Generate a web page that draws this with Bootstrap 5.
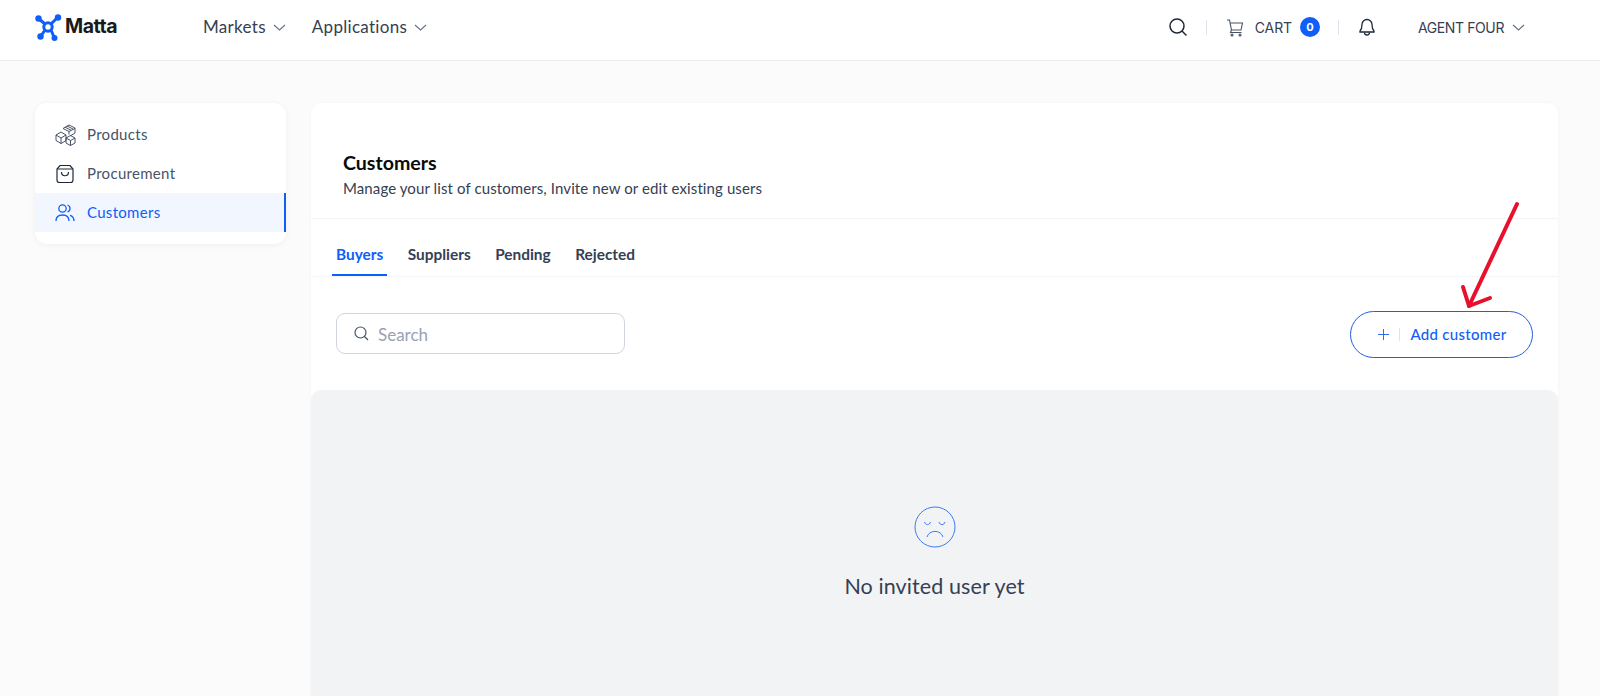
<!DOCTYPE html>
<html lang="en">
<head>
<meta charset="utf-8">
<title>Matta - Customers</title>
<link href="https://cdn.jsdelivr.net/npm/bootstrap@5.3.0/dist/css/bootstrap.min.css" rel="stylesheet">
<style>
html,body{height:696px;overflow:hidden}
body{background:#fbfbfc;font-family:"Inter","Noto Sans",sans-serif;color:#344054}
.topbar{height:61px;background:#fff;border-bottom:1px solid #eaecf0;padding:0 75px 6px 34px}
.brand-txt{font-size:19.5px;font-weight:700;color:#1a1a1a;letter-spacing:-.5px;margin-left:3px}
.logo-wrap{width:169px}
.menu-link{font-family:"Lato","Inter",sans-serif;font-size:17px;color:#344054;letter-spacing:.3px;margin-right:26px;text-decoration:none}
.menu-link svg{margin-left:7px}
.top-sep{width:1px;height:15px;background:#dfe3ec}
.cart-txt{font-size:14px;color:#344054;letter-spacing:-.1px}
.cart-count{width:20px;height:20px;background:#0f5ef7;color:#fff;font-size:11px;font-weight:700}
.agent-txt{font-size:14px;color:#344054;letter-spacing:-.4px}
.page-shell{padding:42px 42px 0 35px;gap:25px;height:635px}
.side-box{width:251px;height:141px;background:#fff;border-radius:12px;box-shadow:0 1px 6px rgba(16,24,40,.05);padding-top:12px;flex:none}
.side-item{height:39px;padding-left:20px;gap:10px;font-family:"Lato","Inter",sans-serif;font-size:15px;color:#475467;letter-spacing:.3px;text-decoration:none}
.side-item.on{background:#f1f6ff;color:#0f5ef7;border-right:2px solid #0f5ef7}
.side-icon{width:22px;flex:none}
.main-box{background:#fff;border-radius:10px 10px 0 0;box-shadow:0 0 3px rgba(16,24,40,.04);min-width:0}
.head-zone{height:116px;padding:49px 32px 0;border-bottom:1px solid #f2f4f7}
.head-title{font-family:"Lato","Inter",sans-serif;font-size:19.6px;font-weight:700;color:#0a0a0a;line-height:22px;margin:0}
.head-sub{font-family:"Lato","Inter",sans-serif;font-size:15px;color:#344054;line-height:20px;margin:4px 0 0;letter-spacing:.1px}
.tab-zone{height:58px;padding-left:21px;border-bottom:1px solid #f2f4f7;gap:0}
.tab-link{height:57px;padding:14px 4px 0;margin-right:16.500px;font-family:"Lato","Inter",sans-serif;font-size:15.400px;font-weight:700;color:#344054;text-decoration:none;margin-bottom:-1px}
.tab-link.on{color:#0f5ef7;border-bottom:2px solid #0f5ef7;padding-top:16px}
.tool-zone{height:113px;padding:0 25px}
.search-field{width:289px;height:41px;border:1px solid #d0d5dd;border-radius:9px;padding-left:17px;gap:10px}
.search-field input{border:0;outline:0;background:transparent;font-family:"Lato","Inter",sans-serif;font-size:17px;width:220px;padding:2px 0 0;color:#344054;margin-left:-1px}
.search-field input::placeholder{color:#98a2b3;opacity:1}
.add-btn{width:183px;height:47px;border:1px solid #1f5fe8;border-radius:24px;background:#fff;color:#0f5ef7;font-family:"Lato","Inter",sans-serif;font-size:15px;font-weight:500;letter-spacing:.3px;gap:10px;margin-top:1px;padding-left:8px}
.btn-sep{width:1px;height:13px;background:#dfe3ec}
.empty-zone{background:#f2f3f5;border-radius:10px 10px 0 0;flex:1;padding-top:116px}
.empty-txt{font-family:"Lato","Inter",sans-serif;font-size:21.500px;color:#344054;margin:22px 0 0;letter-spacing:.1px}
.arrow-over{position:absolute;left:1450px;top:198px;pointer-events:none}
</style>
</head>
<body>
<header class="topbar d-flex align-items-center">
  <div class="logo-wrap d-flex align-items-center">
    <svg width="28" height="28" viewBox="0 0 28 28" fill="none"><g stroke="#0f5ef7" stroke-width="3"><path d="M5 6 L11 11 M23 5 L17 11 M7 23 L11 17 M20 24 L17 17"/><circle cx="14" cy="14" r="4.200"/></g><g fill="#0f5ef7"><circle cx="4.500" cy="5.500" r="3.200"/><circle cx="24" cy="4.500" r="3.200"/><circle cx="6.500" cy="23.500" r="3.200"/><circle cx="20.500" cy="25" r="3"/></g></svg>
    <span class="brand-txt">Matta</span>
  </div>
  <a class="menu-link d-flex align-items-center" href="#">Markets<svg width="13" height="7" viewBox="0 0 13 7" fill="none"><path d="M1 1l5.500 5L12 1" stroke="#667085" stroke-width="1.100"/></svg></a>
  <a class="menu-link d-flex align-items-center" href="#">Applications<svg width="13" height="7" viewBox="0 0 13 7" fill="none"><path d="M1 1l5.500 5L12 1" stroke="#667085" stroke-width="1.100"/></svg></a>
  <div class="ms-auto d-flex align-items-center">
    <svg width="20" height="20" viewBox="0 0 20 20" fill="none" stroke="#1d2939" stroke-width="1.500"><circle cx="9" cy="9" r="7"/><path d="M14 14l4.500 4.500"/></svg>
    <span class="top-sep" style="margin:0 19px 0 18px"></span>
    <svg width="18" height="19" viewBox="0 0 18 19" fill="none" stroke="#475467" stroke-width="1.100"><path d="M1 2h2.500l2 10h9.500l1.500-7H4"/><path d="M5.500 12l-1 2.500h11"/><circle cx="6" cy="17" r="1"/><circle cx="14" cy="17" r="1"/></svg>
    <span class="cart-txt" style="margin-left:11px">CART</span>
    <span class="cart-count rounded-circle d-flex align-items-center justify-content-center" style="margin-left:8px">0</span>
    <span class="top-sep" style="margin:0 20px 0 18px"></span>
    <svg width="16" height="19" viewBox="0 0 16 19" fill="none" stroke="#1d2939" stroke-width="1.300"><path d="M8 1.500a5 5 0 0 0-5 5c0 4-1 5.500-2 6.500v1h14v-1c-1-1-2-2.500-2-6.500a5 5 0 0 0-5-5z"/><path d="M5.500 14.500a2.500 2.500 0 0 0 5 0"/></svg>
    <span class="agent-txt" style="margin-left:43px">AGENT FOUR</span>
    <svg class="ms-2" width="13" height="7" viewBox="0 0 13 7" fill="none"><path d="M1 1l5.500 5L12 1" stroke="#667085" stroke-width="1.100"/></svg>
  </div>
</header>
<div class="page-shell d-flex align-items-start">
  <nav class="side-box overflow-hidden">
    <a class="side-item d-flex align-items-center" href="#"><span class="side-icon d-flex"><svg width="22" height="22" viewBox="0 0 22 22" fill="none" stroke="#344054" stroke-width=".9"><path d="M8 4.500l6-3.500 6 3v5l-5 3"/><path d="M8 4.500l6 3 6-3M14 7.500v3"/><path d="M10 3.200l6 3M12 2l6 3"/><path d="M1 11l5-3 5 3v5.500l-5 3-5-3zM1 11l5 3 5-3M6 14v5.500"/><path d="M11 14l4.500-2.500L20 14v5l-4.500 2.500L11 19zM11 14l4.500 2.500L20 14M15.500 16.500v5"/></svg></span>Products</a>
    <a class="side-item d-flex align-items-center" href="#"><span class="side-icon d-flex"><svg width="20" height="20" viewBox="0 0 20 20" fill="none" stroke="#1d2939" stroke-width="1.200"><path d="M5 1.500h10l3 3.500v11a2.500 2.500 0 0 1-2.500 2.500h-11A2.500 2.500 0 0 1 2 16V5z"/><path d="M2.500 5h15"/><path d="M6.500 8c0 5 7 5 7 0"/></svg></span>Procurement</a>
    <a class="side-item on d-flex align-items-center" href="#"><span class="side-icon d-flex"><svg width="20" height="20" viewBox="0 0 20 20" fill="none" stroke="#0f5ef7" stroke-width="1.300"><circle cx="7.500" cy="5.500" r="3.700"/><path d="M1 18c0-4 2.500-6 6.500-6s6.500 2 6.500 6"/><path d="M12.500 2a3.700 3.700 0 0 1 0 7"/><path d="M15 12.300c2.500.7 4 2.700 4 5.700"/></svg></span>Customers</a>
  </nav>
  <main class="main-box flex-grow-1 d-flex flex-column align-self-stretch">
    <div class="head-zone">
      <h1 class="head-title">Customers</h1>
      <p class="head-sub">Manage your list of customers, Invite new or edit existing users</p>
    </div>
    <div class="tab-zone d-flex">
      <a class="tab-link on d-flex align-items-center" href="#">Buyers</a>
      <a class="tab-link d-flex align-items-center" href="#">Suppliers</a>
      <a class="tab-link d-flex align-items-center" href="#">Pending</a>
      <a class="tab-link d-flex align-items-center" href="#">Rejected</a>
    </div>
    <div class="tool-zone d-flex align-items-center justify-content-between">
      <label class="search-field d-flex align-items-center mb-0">
        <svg width="15" height="15" viewBox="0 0 15 15" fill="none" stroke="#475467" stroke-width="1.200"><circle cx="6.500" cy="6.500" r="5.500"/><path d="M10.500 10.500l3.500 3.500"/></svg>
        <input type="text" placeholder="Search">
      </label>
      <button class="add-btn d-flex align-items-center justify-content-center" type="button">
        <svg width="11" height="11" viewBox="0 0 11 11" fill="none" stroke="#2f6bea" stroke-width="1"><path d="M5.500 0v11M0 5.500h11"/></svg>
        <span class="btn-sep"></span>
        <span>Add customer</span>
      </button>
    </div>
    <div class="empty-zone text-center">
      <svg width="42" height="42" viewBox="0 0 42 42" fill="none" stroke="#3d7bf5" stroke-width="1"><circle cx="21" cy="21" r="20"/><path d="M10.500 16c1 3.500 5 3.500 6 0M25 16c1 3.500 5 3.500 6 0"/><path d="M13 31c2-7.500 14-7.500 16 0"/></svg>
      <p class="empty-txt">No invited user yet</p>
    </div>
  </main>
</div>
<svg class="arrow-over" width="70" height="115" viewBox="0 0 70 115" fill="none" stroke="#e8112d" stroke-width="4" stroke-linecap="round" stroke-linejoin="round"><path d="M67 6L19 108"/><path d="M13 89l6 19 21-8"/></svg>
<script src="https://cdn.jsdelivr.net/npm/bootstrap@5.3.0/dist/js/bootstrap.bundle.min.js"></script>
</body>
</html>
